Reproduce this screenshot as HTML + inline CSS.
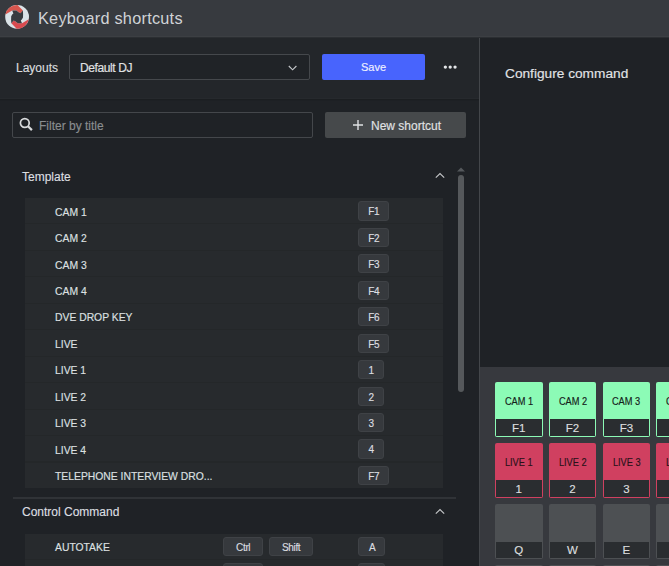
<!DOCTYPE html>
<html><head><meta charset="utf-8">
<style>
*{box-sizing:border-box;margin:0;padding:0}
html,body{width:669px;height:566px;overflow:hidden;background:#1f2226;font-family:"Liberation Sans",sans-serif;color:#d6d8da;-webkit-text-stroke:0.15px}
.abs{position:absolute}
#hdr{left:0;top:0;width:669px;height:38px;background:linear-gradient(#373a3f 0,#373a3f 36px,#3c3f43 36px,#3c3f43 37px,#2b2e32 37px)}
#title{left:38px;top:8.5px;font-size:16.3px;letter-spacing:0.25px;color:#d0d3d6;white-space:nowrap;-webkit-text-stroke:0}
#bar{left:0;top:38px;width:479px;height:61px;background:#23262a;border-bottom:1px solid #26292d}
#barline{left:0;top:99px;width:479px;height:2px;background:linear-gradient(#1b1e21 50%,#1d2024 50%)}
#divider{left:479px;top:38px;width:1px;height:528px;background:#43464a}
.lbl{font-size:12px;white-space:nowrap}
#sel{left:69px;top:54px;width:240.7px;height:26px;border:1px solid #45484c;border-radius:2px;background:#202327}
#save{left:322px;top:54px;width:103px;height:26px;background:#4864fd;border-radius:2px;color:#eef0ff;font-size:11px;text-align:center;line-height:27px}
#filter{left:12px;top:112px;width:301px;height:26px;border:1px solid #44474b;border-radius:2px;background:#1f2226}
#newbtn{left:325px;top:112px;width:141px;height:26px;background:#46494b;border-radius:2px}
.row{position:absolute;left:25px;width:418px;height:25.45px;background:#272a2d}
.rowt{position:absolute;left:29.5px;top:7.7px;font-size:11.5px;color:#dee0e2;white-space:nowrap;transform:scaleX(0.9);transform-origin:0 0}
.key{position:absolute;top:3.4px;height:19.2px;border:1px solid #3f4246;border-radius:3px;background:#36393d;font-size:10px;letter-spacing:-0.35px;text-indent:0.35px;color:#dcdee0;text-align:center;line-height:19.4px}
.kb{position:absolute;width:47.5px;height:54.5px;border-radius:2px}
.kb .t{position:absolute;left:0;right:0;top:0;height:36.5px;text-align:center;font-size:10.5px;line-height:39px}
.kb .t span{display:inline-block;transform:scaleX(0.88)}
.kb .b{position:absolute;left:1px;right:1px;bottom:1px;height:17px;background:#2a2d30;text-align:center;font-size:11.5px;line-height:18px;color:#dcdedf}
.g{background:#8cfbb6}
.g .t{color:#15201a}
.r{background:#d04060}
.r .t{color:#2a1219}
.n{background:#4d5053}
.n .b{height:15.7px;line-height:16.5px}
</style></head><body>
<div id="hdr" class="abs"></div>
<svg class="abs" style="left:0;top:0" width="34" height="34" viewBox="0 0 34 34"><circle cx="17.1" cy="16.9" r="11.9" fill="#dae2e7"/><path d="M5.40 14.60 L12.20 10.60 L16.40 10.60 L18.60 12.20 L20.50 13.20 L22.90 10.60 L17.50 5.00 A11.9 11.9 0 0 0 5.40 14.60 Z" fill="#d6554d"/><path d="M28.80 19.20 L22.00 23.20 L17.80 23.20 L15.60 21.60 L13.70 20.60 L11.30 23.20 L16.70 28.80 A11.9 11.9 0 0 0 28.80 19.20 Z" fill="#d84a4f"/><path d="M12.20 10.60 L16.40 10.60 L18.60 12.20 L20.50 13.20 L22.90 10.60 L23.10 14.00 L23.00 17.50 L21.80 19.50 L20.80 20.40 L22.00 23.20 L17.80 23.20 L15.60 21.60 L13.70 20.60 L11.30 23.20 L11.10 19.80 L11.20 16.30 L12.40 14.30 L13.40 13.40 Z" fill="#373a3f"/></svg>
<div id="title" class="abs">Keyboard shortcuts</div>

<div id="bar" class="abs"></div><div id="barline" class="abs"></div>
<div class="abs lbl" style="left:16px;top:61px;color:#dadcde">Layouts</div>
<div id="sel" class="abs"></div>
<div class="abs lbl" style="left:80px;top:61px;letter-spacing:-0.4px;color:#e0e2e4">Default DJ</div>
<svg class="abs" style="left:288px;top:64.7px" width="10" height="6" viewBox="0 0 10 6"><path d="M0.8 1 L4.6 4.8 L8.4 1" fill="none" stroke="#c4c7ca" stroke-width="1.15"/></svg>
<div id="save" class="abs">Save</div>
<svg class="abs" style="left:443px;top:65px" width="15" height="4" viewBox="0 0 15 4"><circle cx="2.35" cy="2.1" r="1.65" fill="#e4e6e8"/><circle cx="7.2" cy="2.1" r="1.65" fill="#e4e6e8"/><circle cx="12.05" cy="2.1" r="1.65" fill="#e4e6e8"/></svg>

<div id="divider" class="abs"></div>
<div class="abs" style="left:505px;top:66px;font-size:13.7px;color:#e2e4e6;white-space:nowrap">Configure command</div>

<div id="filter" class="abs"></div>
<svg class="abs" style="left:19px;top:117px" width="15" height="15" viewBox="0 0 15 15"><circle cx="5.8" cy="6" r="4.4" fill="none" stroke="#d8dadc" stroke-width="1.7"/><path d="M9 9.2 L12.9 13.1" stroke="#d8dadc" stroke-width="2.2"/></svg>
<div class="abs lbl" style="left:39px;top:119px;color:#8a8d90">Filter by title</div>
<div id="newbtn" class="abs"></div>
<svg class="abs" style="left:352px;top:119px" width="12" height="12" viewBox="0 0 12 12"><path d="M6 1 V11 M1 6 H11" stroke="#e0e2e4" stroke-width="1.4"/></svg>
<div class="abs lbl" style="left:371px;top:119px;color:#e0e2e4">New shortcut</div>

<div class="abs lbl" style="left:22px;top:170px;color:#dcdee0">Template</div>
<svg class="abs" style="left:435px;top:172.2px" width="10" height="7" viewBox="0 0 10 7"><path d="M0.8 5.6 L5 1.5 L9.2 5.6" fill="none" stroke="#c4c6c8" stroke-width="1.15"/></svg>
<svg class="abs" style="left:457px;top:167px" width="8" height="5" viewBox="0 0 8 5"><path d="M0 4.5 L4 0.5 L8 4.5Z" fill="#55585c"/></svg>
<div class="abs" style="left:458px;top:175px;width:6px;height:217px;border-radius:3px;background:#55585b"></div>

<div class="abs" style="left:25px;top:198px;width:418px;height:289.5px;background:#242729"></div>
<div class="row" style="top:198.00px"><div class="rowt">CAM 1</div><div class="key" style="left:333px;width:31px">F1</div></div>
<div class="row" style="top:224.45px"><div class="rowt">CAM 2</div><div class="key" style="left:333px;width:31px">F2</div></div>
<div class="row" style="top:250.90px"><div class="rowt">CAM 3</div><div class="key" style="left:333px;width:31px">F3</div></div>
<div class="row" style="top:277.35px"><div class="rowt">CAM 4</div><div class="key" style="left:333px;width:31px">F4</div></div>
<div class="row" style="top:303.80px"><div class="rowt">DVE DROP KEY</div><div class="key" style="left:333px;width:31px">F6</div></div>
<div class="row" style="top:330.25px"><div class="rowt">LIVE</div><div class="key" style="left:333px;width:31px">F5</div></div>
<div class="row" style="top:356.70px"><div class="rowt">LIVE 1</div><div class="key" style="left:333px;width:26px">1</div></div>
<div class="row" style="top:383.15px"><div class="rowt">LIVE 2</div><div class="key" style="left:333px;width:26px">2</div></div>
<div class="row" style="top:409.60px"><div class="rowt">LIVE 3</div><div class="key" style="left:333px;width:26px">3</div></div>
<div class="row" style="top:436.05px"><div class="rowt">LIVE 4</div><div class="key" style="left:333px;width:26px">4</div></div>
<div class="row" style="top:462.50px"><div class="rowt">TELEPHONE INTERVIEW DRO...</div><div class="key" style="left:333px;width:31px">F7</div></div>

<div class="abs" style="left:13px;top:497px;width:443px;height:2px;background:#303337"></div>
<div class="abs lbl" style="left:22px;top:505px;color:#dcdee0">Control Command</div>
<svg class="abs" style="left:435px;top:507.6px" width="10" height="7" viewBox="0 0 10 7"><path d="M0.8 5.6 L5 1.5 L9.2 5.6" fill="none" stroke="#c4c6c8" stroke-width="1.15"/></svg>

<div class="abs" style="left:25px;top:533.5px;width:418px;height:33px;background:#242729"></div>
<div class="row" style="top:533.5px">
  <div class="rowt">AUTOTAKE</div>
  <div class="key" style="left:198px;width:40px">Ctrl</div>
  <div class="key" style="left:244px;width:44px">Shift</div>
  <div class="key" style="left:333.4px;width:27px">A</div>
</div>
<div class="row" style="top:560px">
  <div class="key" style="left:198px;width:40px"></div>
  <div class="key" style="left:333.4px;width:27px"></div>
</div>

<div class="abs" style="left:480px;top:367px;width:189px;height:199px;background:#37393e"></div>
<div class="kb g" style="left:495.0px;top:382.2px"><div class="t"><span>CAM 1</span></div><div class="b">F1</div></div>
<div class="kb g" style="left:548.8px;top:382.2px"><div class="t"><span>CAM 2</span></div><div class="b">F2</div></div>
<div class="kb g" style="left:602.6px;top:382.2px"><div class="t"><span>CAM 3</span></div><div class="b">F3</div></div>
<div class="kb g" style="left:656.4px;top:382.2px"><div class="t"><span>CAM 4</span></div><div class="b">F4</div></div>
<div class="kb r" style="left:495.0px;top:443.1px"><div class="t"><span>LIVE 1</span></div><div class="b">1</div></div>
<div class="kb r" style="left:548.8px;top:443.1px"><div class="t"><span>LIVE 2</span></div><div class="b">2</div></div>
<div class="kb r" style="left:602.6px;top:443.1px"><div class="t"><span>LIVE 3</span></div><div class="b">3</div></div>
<div class="kb r" style="left:656.4px;top:443.1px"><div class="t"><span>LIVE 4</span></div><div class="b">4</div></div>
<div class="kb n" style="left:495.0px;top:504.0px"><div class="t"><span></span></div><div class="b">Q</div></div>
<div class="kb n" style="left:548.8px;top:504.0px"><div class="t"><span></span></div><div class="b">W</div></div>
<div class="kb n" style="left:602.6px;top:504.0px"><div class="t"><span></span></div><div class="b">E</div></div>
<div class="kb n" style="left:656.4px;top:504.0px"><div class="t"><span></span></div><div class="b">R</div></div>
<div class="kb n" style="left:495.0px;top:564.9px"><div class="t"><span></span></div><div class="b">A</div></div>
<div class="kb n" style="left:548.8px;top:564.9px"><div class="t"><span></span></div><div class="b">S</div></div>
<div class="kb n" style="left:602.6px;top:564.9px"><div class="t"><span></span></div><div class="b">D</div></div>
<div class="kb n" style="left:656.4px;top:564.9px"><div class="t"><span></span></div><div class="b">F</div></div>

</body></html>
